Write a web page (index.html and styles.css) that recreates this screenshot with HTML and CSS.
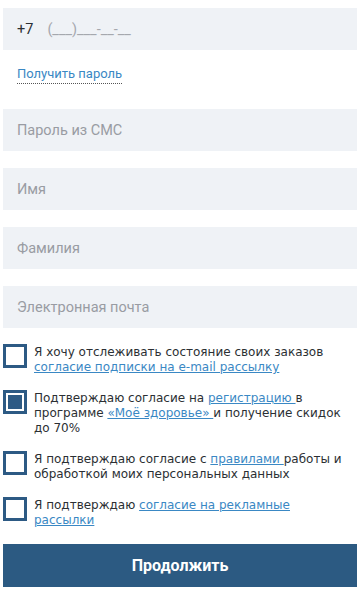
FILE: index.html
```html
<!DOCTYPE html>
<html lang="ru">
<head>
    <meta charset="UTF-8">
    <meta name="viewport" content="width=device-width, initial-scale=1.0">
    <title>Регистрация</title>
    <link rel="stylesheet" href="styles.css">
</head>
<body>
    <form class="register">
        <div class="field phone">
            <span class="prefix">+7</span>
            <span class="mask">(___)___-__-__</span>
        </div>
        <div class="get-pass">
            <a href="#" class="dotted">Получить пароль</a>
        </div>
        <div class="field"><span class="placeholder">Пароль из СМС</span></div>
        <div class="field"><span class="placeholder">Имя</span></div>
        <div class="field"><span class="placeholder">Фамилия</span></div>
        <div class="field"><span class="placeholder">Электронная почта</span></div>

        <div class="checks">
            <label class="check">
                <span class="box"></span>
                <span class="text">Я хочу отслеживать состояние своих заказов <a href="#">согласие подписки на e-mail рассылку</a></span>
            </label>
            <label class="check">
                <span class="box checked"></span>
                <span class="text">Подтверждаю согласие на <a href="#">регистрацию </a>в программе <a href="#">«Моё здоровье» </a>и получение скидок до 70%</span>
            </label>
            <label class="check">
                <span class="box"></span>
                <span class="text">Я подтверждаю согласие с <a href="#">правилами </a>работы и обработкой моих персональных данных</span>
            </label>
            <label class="check">
                <span class="box"></span>
                <span class="text">Я подтверждаю <a href="#">согласие на рекламные рассылки</a></span>
            </label>
        </div>

        <button type="button" class="submit">Продолжить</button>
    </form>
</body>
</html>
```

FILE: styles.css
```css
body {
    margin: 0;
    padding: 8px 3px 0;
    background: #fff;
    font-family: Roboto, 'Noto Sans', sans-serif;
    color: #2b2f33;
}
.register {
    display: flex;
    flex-direction: column;
}
.field {
    height: 42px;
    background: #eff2f6;
    display: flex;
    align-items: center;
    padding: 0 14px;
    margin-bottom: 17px;
    font-size: 14.5px;
}
.placeholder {
    color: #999ca3;
}
.phone {
    margin-bottom: 0;
}
.prefix {
    color: #2b2f33;
    margin-right: 14px;
}
.mask {
    color: #a5a8ae;
}
.get-pass {
    padding: 13px 14px 27px;
}
.dotted {
    color: #3a88c4;
    font-size: 13px;
    text-decoration: none;
    border-bottom: 1px dotted #555;
    padding-bottom: 2px;
}
.checks {
    display: flex;
    flex-direction: column;
    gap: 15px;
    margin-top: -1px;
    margin-bottom: 16px;
}
.check {
    display: flex;
    align-items: flex-start;
    gap: 7px;
    font-family: 'DejaVu Sans', Verdana, sans-serif;
    font-size: 12px;
    line-height: 15px;
    color: #2b2f33;
}
.box {
    flex: none;
    width: 18px;
    height: 18px;
    border: 3px solid #2d5a84;
    position: relative;
}
.box.checked::after {
    content: '';
    position: absolute;
    inset: 2px;
    background: #2d5a84;
}
.text {
    padding-top: 1px;
    padding-right: 6px;
}
.text a {
    color: #3a88c4;
    text-decoration: underline;
}
.submit {
    height: 43px;
    border: none;
    background: #2c5a82;
    color: #fff;
    font-family: Roboto, sans-serif;
    font-weight: 700;
    font-size: 16px;
    cursor: pointer;
}
```
